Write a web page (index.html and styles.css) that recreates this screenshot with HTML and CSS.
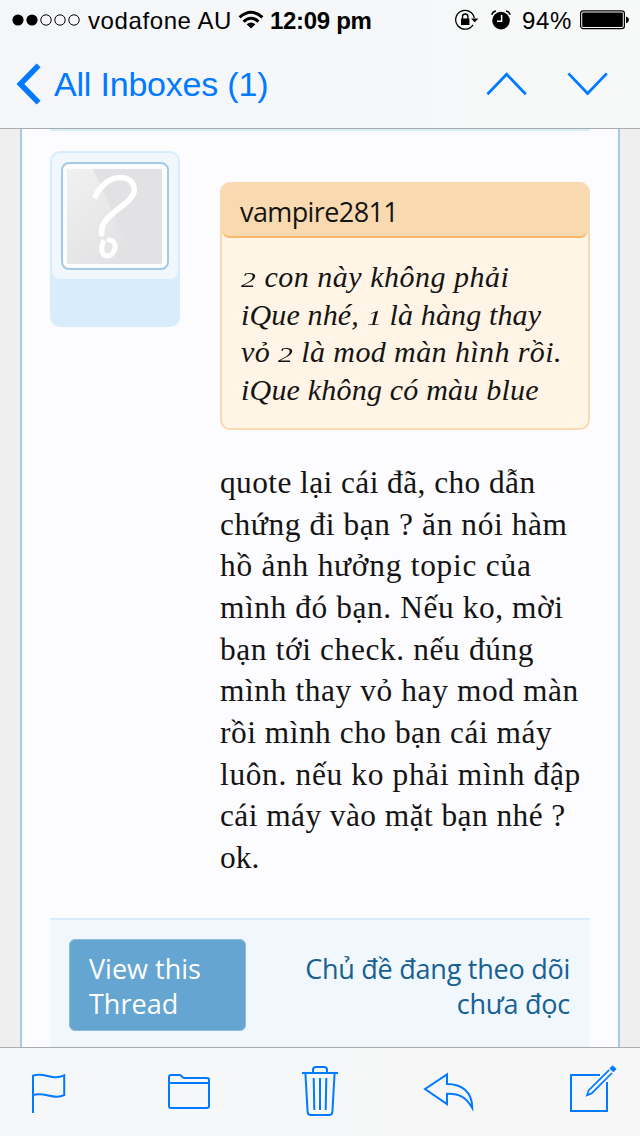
FILE: index.html
```html
<!DOCTYPE html>
<html lang="vi">
<head>
  <meta charset="UTF-8" />
  <meta name="viewport" content="width=device-width, initial-scale=1.0" />
  <title>All Inboxes</title>
  <link rel="stylesheet" href="styles.css">
</head>
<body>

  <header class="top">
    <div class="status">
      <svg class="signal" width="68" height="12" viewBox="0 0 68 12">
        <circle cx="6" cy="6" r="5.6" />
        <circle cx="20" cy="6" r="5.6" />
        <g fill="none" stroke="#000" stroke-width="1">
          <circle cx="34" cy="6" r="5.2" />
          <circle cx="48" cy="6" r="5.2" />
          <circle cx="62" cy="6" r="5.2" />
        </g>
      </svg>
      <span class="carrier">vodafone AU</span>
      <svg class="wifi" width="26" height="20" viewBox="0 0 26 20">
        <g fill="none" stroke="#000" stroke-width="3">
          <path d="M1.6 7.4 Q13 -2.8 24.4 7.4" />
          <path d="M5.5 11.6 Q13 4.8 20.5 11.6" />
        </g>
        <path d="M8.6 14.3 Q13 10.8 17.4 14.3 L13 18.6 Z" />
      </svg>
      <span class="time">12:09 pm</span>
      <svg class="lock" width="24" height="22" viewBox="0 0 24 22">
        <path d="M18 15.8 A9.4 9.4 0 1 1 19.3 9" fill="none" stroke="#000" stroke-width="1.3" />
        <path d="M16 9.4 H23.4 L19.7 13.2 Z" />
        <rect x="6" y="9.4" width="8.4" height="6.6" rx="0.6" />
        <path d="M7.5 10 V7.4 Q7.5 5 10.2 5 Q12.9 5 12.9 7.4 V10" fill="none" stroke="#000" stroke-width="1.4" />
      </svg>
      <svg class="alarm" width="20" height="20" viewBox="0 0 20 20">
        <circle cx="10" cy="10.6" r="8.8" />
        <path d="M0.8 4.8 Q1.6 1.6 5 1.1 M19.2 4.8 Q18.4 1.6 15 1.1" fill="none" stroke="#000" stroke-width="1.5" />
        <path d="M10.6 5 V11.2 H6" fill="none" stroke="#fff" stroke-width="1.5" />
      </svg>
      <span class="percent">94%</span>
      <svg class="battery" width="50" height="20" viewBox="0 0 50 20">
        <rect x="0.6" y="0.9" width="43.8" height="17.8" rx="2.6" fill="none" stroke="#000" stroke-width="1.2" />
        <rect x="2.2" y="2.5" width="40.6" height="14.6" rx="1" />
        <path d="M46 6.4 Q49 7.4 49 9.8 Q49 12.2 46 13.2 Z" />
      </svg>
    </div>
    <nav class="nav">
      <svg class="back" width="26" height="42" viewBox="0 0 26 42">
        <path d="M22.6 2.4 L4.4 21 L22.6 39.6" fill="none" stroke="#007aff" stroke-width="5.6" />
      </svg>
      <a class="back-label">All Inboxes (1)</a>
      <svg class="arrow-up" width="42" height="24" viewBox="0 0 42 24">
        <path d="M1.4 22.2 L20.6 2.2 L39.8 22.2" fill="none" stroke="#007aff" stroke-width="2.8" />
      </svg>
      <svg class="arrow-down" width="42" height="24" viewBox="0 0 42 24">
        <path d="M1.4 1.4 L20.6 21.4 L39.8 1.4" fill="none" stroke="#007aff" stroke-width="2.8" />
      </svg>
    </nav>
  </header>

  <main class="mail">
    <article class="post">
      <div class="post-row">
        <div class="user">
          <div class="avatar-holder">
            <svg class="avatar" width="108" height="108" viewBox="0 0 108 108">
              <defs>
                <linearGradient id="shine" x1="0" y1="0" x2="0.6" y2="1">
                  <stop offset="0" stop-color="#f1f1f2" />
                  <stop offset="1" stop-color="#e2e2e4" />
                </linearGradient>
                <filter id="soft"><feGaussianBlur stdDeviation="0.7" /></filter>
              </defs>
              <rect x="1" y="1" width="106" height="106" rx="7" fill="#fcfcff" stroke="#a5cae4" stroke-width="2" />
              <rect x="6" y="7" width="95" height="95" fill="#e2e2e4" />
              <path d="M6 7 H32 L75 102 H6 Z" fill="url(#shine)" />
              <g fill="none" stroke="#fff" stroke-linecap="round" filter="url(#soft)">
                <path d="M34.5 34 C39 24 49 15.5 59 15.5 C70 15.5 74 23 73 30 C70 44 39 52 40.5 72" stroke-width="5.6" />
                <path d="M42 80 C39 89 42 94 46.5 94 C51 94 55 88 54 83 C53 79 50 78 48 78" stroke-width="5" />
              </g>
            </svg>
          </div>
        </div>

        <div class="content">
          <blockquote class="quote">
            <div class="quote-author">vampire2811</div>
            <p class="quote-text">
              <span class="line q1"><span class="num">2</span> con này không phải</span>
              <span class="line q2">iQue nhé, <span class="num">1</span> là hàng thay</span>
              <span class="line q3">vỏ <span class="num">2</span> là mod màn hình rồi.</span>
              <span class="line q4">iQue không có màu blue</span>
            </p>
          </blockquote>
          <p class="message">
            <span class="line m1">quote lại cái đã, cho dẫn</span>
            <span class="line m2">chứng đi bạn ? ăn nói hàm</span>
            <span class="line m3">hồ ảnh hưởng topic của</span>
            <span class="line m4">mình đó bạn. Nếu ko, mời</span>
            <span class="line m5">bạn tới check. nếu đúng</span>
            <span class="line m6">mình thay vỏ hay mod màn</span>
            <span class="line m7">rồi mình cho bạn cái máy</span>
            <span class="line m8">luôn. nếu ko phải mình đập</span>
            <span class="line m9">cái máy vào mặt bạn nhé ?</span>
            <span class="line m10">ok.</span>
          </p>
        </div>
      </div>

      <footer class="post-footer">
        <a class="btn-view">View this<br>Thread</a>
        <a class="watched">Chủ đề đang theo dõi<br>chưa đọc</a>
      </footer>
    </article>
  </main>

  <footer class="toolbar">
    <svg class="flag" width="36" height="42" viewBox="0 0 36 42">
      <path d="M2 42 V4.6 C14 1 21 10 33.2 4.4 V24.2 C22 29.5 14 20 2 24" />
    </svg>
    <svg class="folder" width="44" height="38" viewBox="0 0 44 38">
      <path d="M2 33 V4 Q2 2 4 2 H12.5 Q14 2 15 3.6 Q16 5 17.5 5 H40 Q42 5 42 7 V33 Q42 35 40 35 H4 Q2 35 2 33 Z M2 10 H42" />
    </svg>
    <svg class="trash" width="38" height="52" viewBox="0 0 38 52">
      <path d="M1 7 H37 M12 7 V4 Q12 1 15 1 H23 Q26 1 26 4 V7 M4.4 7 L6.6 46 Q6.8 49 10 49 H28 Q31.2 49 31.4 46 L33.6 7 M12.7 12 L13.3 44 M19 12 V44 M25.3 12 L24.7 44" />
    </svg>
    <svg class="reply" width="52" height="40" viewBox="0 0 52 40">
      <path d="M3 17 L25 2.3 V12 C40 12 50.3 20 50.3 36 C44 25 37 21.3 25 21.8 V32 Z" />
    </svg>
    <svg class="compose" width="48" height="48" viewBox="0 0 48 48">
      <path d="M32 7 H3 V43 H39 V14" />
      <path d="M41.2 1.8 L20.6 22.4 L19 27.2 L23.6 25.4 L44 5" stroke-width="1.7" />
      <path d="M43 -1.2 L47 2.6" stroke-width="4.6" />
    </svg>
  </footer>

</body>
</html>
```
FILE: styles.css
```css
body {
  margin: 0;
  height: 1136px;
  display: flex;
  flex-direction: column;
  overflow: hidden;
  background: #efefef;
  color: #141414;
}

svg {
  display: block;
  flex: none;
  overflow: visible;
}

p,
blockquote {
  margin: 0;
}

/* status bar and navigation */
.top {
  height: 128px;
  flex: none;
  background: linear-gradient(90deg, #f5f6f9, #f7f8f8);
  border-bottom: 1px solid #a9abad;
  font-family: "Liberation Sans", sans-serif;
}

.status {
  height: 40px;
  display: flex;
  align-items: center;
  padding-left: 12px;
  font-size: 24px;
  line-height: 38px;
  color: #000;
  white-space: nowrap;
}

.carrier {
  width: 144px;
  margin-left: 8px;
  padding-top: 2px;
  letter-spacing: 0.6px;
}

.wifi {
  margin-left: 6px;
}

.time {
  width: 102px;
  margin-left: 6px;
  padding-top: 2px;
  font-weight: bold;
  letter-spacing: -0.3px;
}

.lock {
  margin-left: 83px;
}

.alarm {
  margin-left: 12px;
}

.percent {
  width: 50px;
  margin-left: 11px;
  padding-top: 2px;
  letter-spacing: 0.6px;
}

.battery {
  margin-left: 8px;
}

.nav {
  height: 88px;
  display: flex;
  align-items: center;
  padding-left: 16px;
  color: #007aff;
}

.back-label {
  width: 432px;
  margin-left: 12px;
  font-size: 34px;
  letter-spacing: -0.2px;
}

.arrow-down {
  margin-left: 39px;
}

/* mail body */
.mail {
  height: 918px;
  flex: none;
  overflow: hidden;
}

.post {
  height: 918px;
  box-sizing: border-box;
  margin: 0 20px;
  padding: 0 28px;
  background: #fcfcff;
  border: solid #a5cae4;
  border-width: 0 2px;
}

.post-row {
  height: 787px;
  display: flex;
  align-items: flex-start;
  border-top: 2px solid #d7edfc;
}

.user {
  width: 130px;
  height: 176px;
  box-sizing: border-box;
  margin-top: 20px;
  border: 2px solid #d7edfc;
  border-radius: 10px;
  background: #d7edfc;
}

.avatar-holder {
  height: 126px;
  display: flex;
  justify-content: center;
  align-items: center;
  border-radius: 8px;
  background: #f0f7fd;
}

.content {
  width: 370px;
  margin: 51px 0 0 40px;
}

.quote {
  height: 248px;
  box-sizing: border-box;
  border: 2px solid #f9d9b0;
  border-radius: 10px;
  background: #fff4e5;
}

.quote-author {
  height: 54px;
  box-sizing: border-box;
  padding-left: 18px;
  border-bottom: 2px solid #fcb866;
  border-radius: 8px;
  background: #f9d9b0;
  font: 27px/56px "Open Sans", sans-serif;
  letter-spacing: -0.6px;
}

.quote-text {
  padding: 20px 0 0 19px;
  font: italic 30px/37.5px "Liberation Serif", serif;
}

.message {
  padding-top: 32px;
  font: 31.4px/41.65px "Liberation Serif", serif;
}

.line {
  display: block;
  white-space: nowrap;
}

/* old-style figures stay at x-height */
.num {
  font-size: 22px;
  line-height: 1;
  display: inline-block;
  transform: scaleX(1.35);
  transform-origin: left;
  margin-right: 4px;
}

.q1 { letter-spacing: 0.5px; }
.q2 { letter-spacing: 0.15px; }
.q3 { letter-spacing: 0.4px; }
.q4 { letter-spacing: 0.2px; }

.m1 { letter-spacing: 0.42px; }
.m2 { letter-spacing: 0.6px; }
.m3 { letter-spacing: 0.75px; }
.m4 { letter-spacing: 0.58px; }
.m5 { letter-spacing: 0.62px; }
.m6 { letter-spacing: 0.6px; }
.m7 { letter-spacing: 0.51px; }
.m8 { letter-spacing: 0.67px; }
.m9 { letter-spacing: 0.44px; }

.post-footer {
  height: 129px;
  box-sizing: border-box;
  display: flex;
  justify-content: space-between;
  padding: 19px 20px 0 19px;
  border-top: 2px solid #d7edfc;
  background: #f0f7fd;
  font: 27px/35px "Open Sans", sans-serif;
}

.btn-view {
  width: 177px;
  height: 92px;
  box-sizing: border-box;
  padding: 11px 19px;
  border: 1px solid #8dbcdd;
  border-radius: 6px;
  background: #65a5d1;
  color: #fff;
}

.watched {
  padding-top: 12px;
  text-align: right;
  white-space: nowrap;
  color: #176093;
  letter-spacing: -0.25px;
}

/* bottom toolbar */
.toolbar {
  height: 88px;
  flex: none;
  display: flex;
  align-items: center;
  padding-left: 31px;
  border-top: 1px solid #a9abad;
  background: linear-gradient(90deg, #f5f7f9, #f7f7f7);
}

.toolbar svg {
  fill: none;
  stroke: #007aff;
  stroke-width: 2;
}

.folder {
  margin-left: 100px;
}

.trash {
  margin-left: 90px;
}

.reply {
  margin-left: 83px;
}

.compose {
  margin-left: 94px;
}
```
